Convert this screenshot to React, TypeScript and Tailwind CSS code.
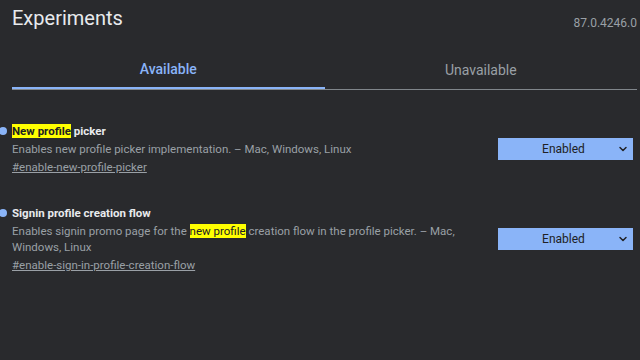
import * as React from 'react';
import { ChevronDown } from 'lucide-react';

interface Experiment {
  id: string;
  title: React.ReactNode;
  description: React.ReactNode;
  link: string;
}

function Mark({ children }: { children: React.ReactNode }) {
  return <span className="bg-[#ffff00] text-[#202124]">{children}</span>;
}

const experiments: Experiment[] = [
  {
    id: 'picker',
    title: (
      <>
        <Mark>New profile</Mark> picker
      </>
    ),
    description: 'Enables new profile picker implementation. – Mac, Windows, Linux',
    link: '#enable-new-profile-picker',
  },
  {
    id: 'signin',
    title: 'Signin profile creation flow',
    description: (
      <>
        Enables signin promo page for the <Mark>new profile</Mark> creation flow in the profile picker. – Mac,
        Windows, Linux
      </>
    ),
    link: '#enable-sign-in-profile-creation-flow',
  },
];

function ExperimentRow({ exp }: { exp: Experiment }) {
  return (
    <div className="flex items-center">
      <div className="flex-1 min-w-0 flex items-start">
        <div className="w-3 shrink-0 pt-[4px] -ml-[1px] mr-[1px]">
          <span className="block w-2 h-2 rounded-full bg-[#8ab4f8]" />
        </div>
        <div className="flex-1 min-w-0 pr-[30px]">
          <h3 className="text-[11.5px] leading-[16px] font-bold text-[#e8eaed]">{exp.title}</h3>
          <p className="mt-[2px] text-[11.5px] leading-[16px] text-[#9aa0a6]">{exp.description}</p>
          <a className="block mt-[2px] text-[11.5px] leading-[16px] text-[#9aa0a6] underline">{exp.link}</a>
        </div>
      </div>
      <div className="w-[135px] h-[22px] mr-[7px] shrink-0 bg-[#8ab4f8] flex items-center relative">
        <span className="flex-1 text-center text-[12px] text-[#202124] pr-[4px]">Enabled</span>
        <ChevronDown className="absolute right-[4px] w-[12px] h-[12px] text-[#202124]" strokeWidth={3} />
      </div>
    </div>
  );
}

export default function App() {
  return (
    <div className="w-[640px] h-[360px] bg-[#292a2d] overflow-hidden font-['Roboto',sans-serif]">
      <div className="flex items-start justify-between pl-3 pr-[3px] pt-[6px]">
        <h1 className="text-[20px] leading-[24px] text-[#e8eaed]">Experiments</h1>
        <span className="text-[12px] leading-[15px] mt-[10px] text-[#9aa0a6]">87.0.4246.0</span>
      </div>

      <div className="ml-3 mr-[3px] mt-[20px] flex border-b border-[#80868b]">
        <div className="flex-1 h-[38px] flex items-center justify-center text-[14px] font-medium text-[#8ab4f8] border-b-2 border-[#8ab4f8] -mb-[1px]">
          Available
        </div>
        <div className="flex-1 h-[38px] flex items-center justify-center text-[14px] text-[#9aa0a6]">
          Unavailable
        </div>
      </div>

      <div className="mt-[33px] flex flex-col gap-[30px]">
        {experiments.map((exp) => (
          <ExperimentRow key={exp.id} exp={exp} />
        ))}
      </div>
    </div>
  );
}
